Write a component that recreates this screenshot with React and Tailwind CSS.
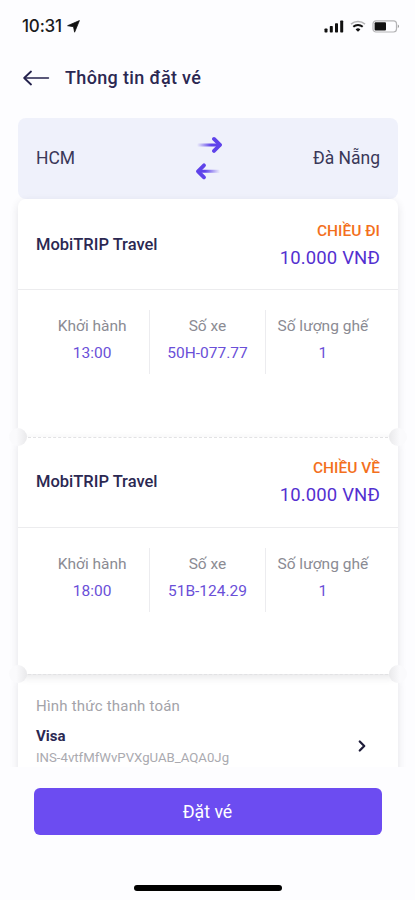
import { ChevronRight } from "lucide-react"

const trips = [
    { name: "MobiTRIP Travel", label: "CHIỀU ĐI", price: "10.000 VNĐ", time: "13:00", plate: "50H-077.77", seats: "1" },
    { name: "MobiTRIP Travel", label: "CHIỀU VỀ", price: "10.000 VNĐ", time: "18:00", plate: "51B-124.29", seats: "1" },
]

function StatusBar(){
    return(
        <div className="flex h-[52px] shrink-0 items-center justify-between pl-[22px] pr-[15px]">
            <div className="flex items-center gap-[5px]">
                <span className="pt-px font-['Inter',sans-serif] text-[17px] font-medium tracking-[-0.2px] text-[#1b1b1d]">10:31</span>
                <svg width="13" height="13" viewBox="0 0 13 13">
                    <path d="M12.4 0.6L7.6 12.2L6.5 6.7L0.6 5.7Z" fill="#111" stroke="#111" strokeWidth="0.8" strokeLinejoin="round" />
                </svg>
            </div>
            <div className="flex items-center gap-[6px]">
                <svg width="20" height="13" viewBox="0 0 20 13" fill="#111">
                    <rect x="0.5" y="8.5" width="3" height="4" rx="0.7" />
                    <rect x="5.8" y="6" width="3" height="6.5" rx="0.7" />
                    <rect x="11" y="3.3" width="3" height="9.2" rx="0.7" />
                    <rect x="16.2" y="0.5" width="3" height="12" rx="0.7" />
                </svg>
                <svg width="16" height="12" viewBox="0 0 16 12" fill="none">
                    <path d="M1 4.1A10.5 10.5 0 0 1 15 4.1" stroke="#b5b5b7" strokeWidth="1.6" />
                    <path d="M3.3 6.8A7 7 0 0 1 12.7 6.8" stroke="#111" strokeWidth="2" />
                    <path d="M8 11.8L5.6 9.4A3.5 3.5 0 0 1 10.4 9.4Z" fill="#111" />
                </svg>
                <svg width="28" height="13" viewBox="0 0 28 13" fill="none">
                    <rect x="1" y="0.8" width="23.5" height="11.2" rx="3" stroke="#b4b4b6" strokeWidth="1.2" />
                    <rect x="2.6" y="2.2" width="11.4" height="8.4" rx="1" fill="#111" />
                    <path d="M25.8 4.6V8.2C27.3 7.6 27.3 5.2 25.8 4.6Z" fill="#8c8c8e" />
                </svg>
            </div>
        </div>
    )
}

function Header(){
    return(
        <header className="flex h-[52px] shrink-0 items-center pl-[23px]">
            <svg width="27" height="16" viewBox="0 0 27 16" fill="none" stroke="#24224d" strokeLinecap="round" strokeLinejoin="round">
                <path d="M1.5 8H25.5" strokeWidth="1.4" />
                <path d="M8 1.5L1.2 8L8 14.5" strokeWidth="1.8" />
            </svg>
            <h1 className="mb-px ml-[15px] text-[18px] font-medium tracking-[0.35px] text-[#2b2852]">Thông tin đặt vé</h1>
        </header>
    )
}

function SwapArrows(){
    return(
        <svg width="28" height="46" viewBox="0 0 28 46" fill="none" strokeLinecap="round" strokeLinejoin="round">
            <defs>
                <linearGradient id="fadeLeft" gradientUnits="userSpaceOnUse" x1="3" y1="0" x2="17" y2="0">
                    <stop offset="0" stopColor="#5f43ea" stopOpacity="0" />
                    <stop offset="1" stopColor="#5f43ea" />
                </linearGradient>
                <linearGradient id="fadeRight" gradientUnits="userSpaceOnUse" x1="11" y1="0" x2="26" y2="0">
                    <stop offset="0" stopColor="#5f43ea" />
                    <stop offset="1" stopColor="#5f43ea" stopOpacity="0" />
                </linearGradient>
            </defs>
            <path d="M4 8.9H26V9" stroke="url(#fadeLeft)" strokeWidth="3" />
            <path d="M20 2.9L26 8.9L20 14.9" stroke="#5f43ea" strokeWidth="3.8" />
            <path d="M4 35.3H25V35.4" stroke="url(#fadeRight)" strokeWidth="3" />
            <path d="M10 29.3L4 35.3L10 41.3" stroke="#5f43ea" strokeWidth="3.8" />
        </svg>
    )
}

function Column({ title, value }){
    return(
        <div className="flex h-16 flex-1 flex-col items-center pt-[4px]">
            <span className="whitespace-nowrap text-[15.5px] leading-[25px] text-[#8b8b93]">{title}</span>
            <span className="text-[15.5px] leading-[29px] text-[#6a4fd8]">{value}</span>
        </div>
    )
}

function TripCard({ trip }){
    return(
        <section className="relative h-[237.5px] rounded-lg bg-white shadow-[0_3px_9px_rgba(40,40,60,0.12)]">
            <div className="flex h-[91px] items-center justify-between border-b border-[#ececee] px-[18px]">
                <h2 className="pt-[2px] text-[16.5px] font-medium text-[#2b2852]">{trip.name}</h2>
                <div className="flex flex-col items-end pt-[1px]">
                    <span className="text-[15.5px] font-medium leading-[26px] text-[#f3701d]">{trip.label}</span>
                    <span className="text-[18.5px] leading-[28px] tracking-[0.15px] text-[#5330d0]">{trip.price}</span>
                </div>
            </div>
            <div className="ml-[17px] mr-[18px] mt-[20px] flex divide-x divide-[#ececef]">
                <Column title="Khởi hành" value={trip.time} />
                <Column title="Số xe" value={trip.plate} />
                <Column title="Số lượng ghế" value={trip.seats} />
            </div>
            {/* perforated edge with the two notches */}
            <div className="absolute inset-x-2.5 -bottom-px z-10 border-b border-dashed border-[#e2e2e4]"></div>
            <div className="absolute -bottom-[9px] -left-[9px] z-10 h-[18px] w-[18px] rounded-full bg-gradient-to-r from-[#fafafc] from-40% to-[#e9e9eb]"></div>
            <div className="absolute -bottom-[9px] -right-[9px] z-10 h-[18px] w-[18px] rounded-full bg-gradient-to-l from-[#fafafc] from-40% to-[#e9e9eb]"></div>
        </section>
    )
}

export default function App(){
    return(
        <div className="flex h-[900px] w-[415px] flex-col overflow-hidden bg-[#fdfdff] font-['Roboto',sans-serif]">
            <StatusBar />
            <Header />
            <main className="h-[663px] shrink-0 overflow-hidden pl-[18px] pr-[17px] pt-[14px]">
                <div className="flex h-[81px] items-center justify-between rounded-lg bg-[#eff1fb] px-[18px] text-[17.5px] text-[#3a3858]">
                    <span className="flex-1 pb-px">HCM</span>
                    <SwapArrows />
                    <span className="flex-1 pb-px text-right">Đà Nẵng</span>
                </div>
                {trips.map((trip) => (
                    <TripCard key={trip.label} trip={trip} />
                ))}
                <section className="h-[160px] rounded-lg bg-white px-[18px] pt-[20px] shadow-[0_3px_9px_rgba(40,40,60,0.12)]">
                    <p className="text-[15px] leading-[25px] tracking-[0.2px] text-[#a3a3a9]">Hình thức thanh toán</p>
                    <div className="flex items-center justify-between pt-[6px]">
                        <div>
                            <p className="text-[15px] font-bold leading-[22px] text-[#2b2852]">Visa</p>
                            <p className="text-[13.2px] leading-[21px] text-[#aaaab0]">INS-4vtfMfWvPVXgUAB_AQA0Jg</p>
                        </div>
                        <ChevronRight className="mb-px mr-[9px]" size={18} strokeWidth={3} color="#1f1d3a" />
                    </div>
                </section>
            </main>
            <footer className="flex flex-1 flex-col items-center pt-[21px]">
                <button className="h-[47px] w-[348px] rounded-md bg-[#6c4cf1] pt-px text-[17.7px] text-white">Đặt vé</button>
                <div className="mt-[50px] h-[6px] w-[148px] rounded-full bg-black"></div>
            </footer>
        </div>
    )
}
